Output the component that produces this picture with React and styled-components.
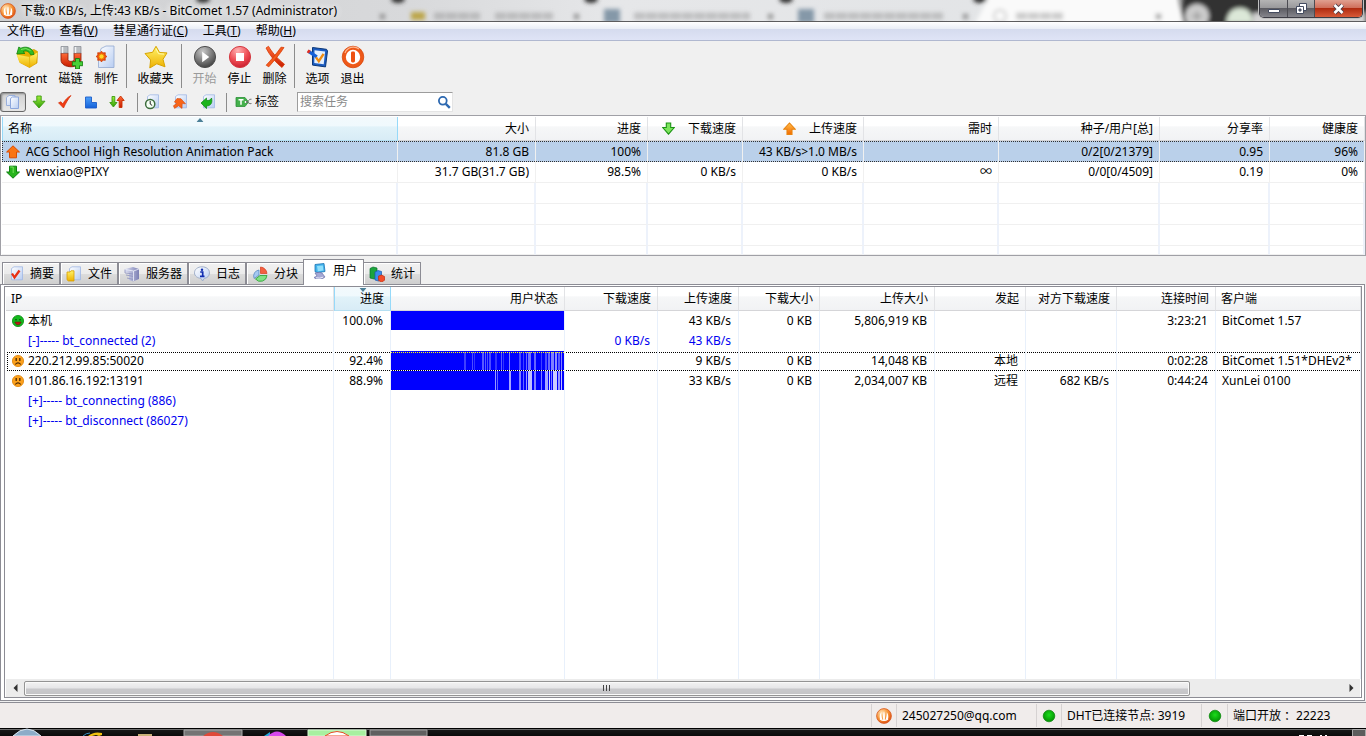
import React from "react";
import styled, { createGlobalStyle, css } from "styled-components";

const fontStack = `"Noto Sans", "Noto Sans CJK SC", sans-serif`;

const GlobalStyle = createGlobalStyle`
  * { box-sizing: border-box; }
  body { margin: 0; background: #f0f0f0; font: 12px/16px ${fontStack}; color: #000; }
  button, input, table { font: inherit; color: inherit; }
  svg { display: block; flex: none; }
`;

/* ---------- window frame ---------- */

const Window = styled.div`
  display: flex;
  flex-direction: column;
  height: 100vh;
  min-width: 1100px;
  overflow: hidden;
`;

const TitleBar = styled.header`
  position: relative;
  display: flex;
  align-items: center;
  gap: 5px;
  height: 22px;
  flex: none;
  overflow: hidden;
  border-bottom: 1px solid #5c5c5e;
  background: linear-gradient(90deg, #cfd0d2 0, #d8d9db 30%, #e6e7e9 45%, #e2e4e6 80%, #fff 84%, #f4f4f4 86%, #2c2c2c 87%, #333 100%);
`;

const Glass = styled.svg`
  position: absolute;
  inset: 0;
  width: 100%;
  height: 100%;
`;

const AppTitle = styled.h1`
  position: relative;
  flex: 1;
  margin: 0;
  font-size: 12px;
  line-height: 20px;
  font-weight: 400;
  text-shadow: 0 0 6px #fff, 0 0 8px #fff;
`;

const TitleIcon = styled.span`
  position: relative;
  padding-top: 1px;
`;

const Captions = styled.div`
  position: relative;
  display: flex;
  align-self: flex-start;
  height: 18px;
  margin-right: 3px;
  border: 1px solid #3c3c44;
  border-top: 0;
  border-radius: 0 0 5px 5px;
  overflow: hidden;
  box-shadow: 0 0 0 1px #c0c0c0;
`;

const CaptionButton = styled.button`
  display: flex;
  align-items: center;
  justify-content: center;
  width: ${(p) => p.$width}px;
  padding: 0;
  border: 0;
  border-right: 1px solid #4c4c52;
  background: ${(p) =>
    p.$close
      ? "linear-gradient(#e0a090, #d0705c 45%, #b02c10 50%, #d85a38)"
      : "linear-gradient(#b4b4b4, #9a9a9c 45%, #5c5c62 50%, #85858c)"};
  &:last-child { border-right: 0; }
`;

const MenuBar = styled.nav`
  display: flex;
  flex: none;
  height: 19px;
  border-bottom: 1px solid #b0b8d0;
  background: linear-gradient(#fff 0, #e9edf6 7px, #d5dbee 7px, #dfe4f6 100%);
`;

const MenuItem = styled.button`
  padding: 0 8px 0 7px;
  border: 0;
  background: none;
  line-height: 18px;
  white-space: nowrap;
`;

/* ---------- toolbars ---------- */

const Toolbar = styled.div`
  display: flex;
  flex: none;
  height: 48px;
  padding-top: 3px;
`;

const Divider = styled.div`
  width: 1px;
  height: ${(p) => p.$height}px;
  margin: 0 ${(p) => p.$after}px 0 ${(p) => p.$before}px;
  background: #8c8c8c;
`;

const ToolButton = styled.button`
  display: flex;
  flex-direction: column;
  align-items: center;
  width: ${(p) => p.$width}px;
  padding: 1px 0 0;
  border: 0;
  background: none;
  line-height: 18px;
  white-space: nowrap;
  gap: 1px;
  color: ${(p) => (p.disabled ? "#9a9a9a" : "#000")};
`;

const FilterBar = styled.div`
  display: flex;
  align-items: center;
  flex: none;
  height: 26px;
`;

const FilterButton = styled.button`
  display: flex;
  align-items: center;
  justify-content: center;
  width: ${(p) => p.$width}px;
  height: 20px;
  padding: 0;
  border: 1px solid transparent;
  border-radius: 3px;
  background: none;
  ${(p) =>
    p.$pressed &&
    css`
      border-color: #686868;
      background: linear-gradient(#d0d0d0, #e8e8e8);
      box-shadow: inset 1px 1px 2px #888;
    `}
`;

const TagButton = styled.button`
  display: flex;
  align-items: center;
  gap: 3px;
  padding: 0;
  margin-right: 18px;
  border: 0;
  background: none;
`;

const SearchBox = styled.label`
  display: flex;
  align-items: center;
  width: 156px;
  height: 20px;
  padding: 0 1px 0 2px;
  border: 1px solid #e4e4e4;
  border-top-color: #9c9c9c;
  border-left-color: #9c9c9c;
  background: #fff;
`;

const SearchInput = styled.input`
  flex: 1;
  min-width: 0;
  padding: 0;
  border: 0;
  outline: 0;
  background: none;
  &::placeholder { color: #8a8a8a; opacity: 1; }
`;

/* ---------- lists ---------- */

const TaskPane = styled.section`
  flex: none;
  height: 141px;
  padding: 1px 0 1px 1px;
  overflow: hidden;
  border: 1px solid #a0a0a6;
  background: #fff;
`;

const Grid = styled.table`
  width: 100%;
  height: ${(p) => (p.$fill ? "100%" : "auto")};
  table-layout: fixed;
  border-collapse: separate;
  border-spacing: 0;
`;

const HeadCell = styled.th`
  position: relative;
  height: 24px;
  padding: 0 6px 0 5px;
  overflow: hidden;
  border-right: 1px solid #e2e3e6;
  border-bottom: 1px solid #d5d5d8;
  background: linear-gradient(#fff 0, #fff 40%, #f6f7f8 42%, #f1f2f4 100%);
  font-weight: 400;
  text-align: ${(p) => p.$align || "right"};
  white-space: nowrap;
  ${(p) =>
    p.$sorted &&
    css`
      border-right-color: #96d9f9;
      border-bottom-color: #b4dff2;
      border-left: 1px solid #96d9f9;
      background: linear-gradient(#f2f9fc 0, #f0f9fd 40%, #e1f2f9 42%, #d8ecf6 100%);
    `}
`;

const HeadLabel = styled.span`
  display: flex;
  align-items: center;
  justify-content: ${(p) => (p.$align === "left" ? "flex-start" : "flex-end")};
  gap: 13px;
`;

const SortMark = styled.svg`
  position: absolute;
  top: 1px;
  left: 50%;
  transform: translateX(-50%);
`;

const dots = (color) => `repeating-linear-gradient(90deg, ${color} 0 1px, transparent 1px 2px)`;
const dotsDown = (color) => `repeating-linear-gradient(${color} 0 1px, transparent 1px 2px)`;

const TaskCell = styled.td`
  height: ${(p) => p.$height || 21}px;
  padding: 0 6px 0 4px;
  overflow: hidden;
  border-right: ${(p) => (p.$empty ? "2px solid #edf2fb" : "1px solid #f0f0f0")};
  border-bottom: ${(p) => (p.$selected ? "0" : "1px solid #f0f0f0")};
  text-align: right;
  white-space: nowrap;
  ${(p) =>
    p.$selected &&
    css`
      background: ${dots("#303030")} 0 0 / 100% 1px no-repeat, ${dots("#303030")} 0 100% / 100% 1px no-repeat, #bad0ea;
      &:first-child {
        background: ${dots("#303030")} 0 0 / 100% 1px no-repeat, ${dots("#303030")} 0 100% / 100% 1px no-repeat,
          ${dotsDown("#303030")} 0 0 / 1px 100% no-repeat, #bad0ea;
      }
    `}
`;

const NameLine = styled.span`
  display: flex;
  align-items: center;
  gap: ${(p) => p.$gap}px;
`;

/* ---------- tabs ---------- */

const TabStrip = styled.div`
  display: flex;
  align-items: flex-end;
  flex: none;
  height: 28px;
  padding-left: 2px;
`;

const Tab = styled.button`
  display: flex;
  align-items: center;
  gap: 6px;
  height: 22px;
  padding: 0 5px;
  border: 1px solid #8c8c94;
  border-bottom: 0;
  box-shadow: inset 1px 1px 0 #fff;
  background: linear-gradient(#f2f2f2 0, #ebebeb 50%, #dcdcdc 52%, #cfcfcf 100%);
  white-space: nowrap;
  ${(p) =>
    p.$active &&
    css`
      position: relative;
      z-index: 1;
      height: 26px;
      margin: 0 -1px;
      margin-bottom: -1px;
      padding: 0 6px 4px 7px;
      background: #fff;
    `}
`;

const TabPanel = styled.section`
  display: flex;
  flex: 1;
  min-height: 0;
  margin: 0 1px 0 0;
  padding: 1px 2px 2px 3px;
  border: 1px solid #8c8c94;
  background: #fff;
`;

const PeerPane = styled.div`
  display: flex;
  flex-direction: column;
  flex: 1;
  min-width: 0;
  padding: 0 0 0 1px;
  border: 1px solid #8c8c94;
`;

const PeerScroll = styled.div`
  flex: 1;
  min-height: 0;
`;

const PeerCell = styled.td`
  height: ${(p) => (p.$filler ? "auto" : "20px")};
  padding: ${(p) => (p.$flush ? "0" : "0 7px 0 6px")};
  border-right: 1px solid #e8f0fb;
  text-align: ${(p) => p.$align || "right"};
  vertical-align: ${(p) => (p.$flush ? "top" : "middle")};
  white-space: nowrap;
  color: ${(p) => (p.$link ? "#0000f0" : "#000")};
  &:first-child { padding-left: ${(p) => (p.$link ? 22 : 6)}px; text-align: left; }
  ${(p) =>
    p.$focused &&
    css`
      background: ${dots("#000")} 1px 1px / 100% 1px no-repeat, ${dots("#000")} 1px 100% / 100% 1px no-repeat;
      &:first-child {
        background: ${dots("#000")} 1px 1px / 100% 1px no-repeat, ${dots("#000")} 1px 100% / 100% 1px no-repeat,
          ${dotsDown("#000")} 1px 1px / 1px 100% no-repeat;
      }
    `}
`;

const ScrollBar = styled.div`
  display: flex;
  align-items: center;
  flex: none;
  height: 18px;
  margin-right: 1px;
  background: #ececec;
`;

const ScrollArrow = styled.button`
  display: flex;
  align-items: center;
  justify-content: center;
  width: 18px;
  height: 16px;
  padding: 0;
  border: 0;
  background: none;
`;

const ScrollThumb = styled.div`
  display: flex;
  align-items: center;
  justify-content: center;
  flex: 23 1 0;
  height: 15px;
  border: 1px solid #949494;
  border-radius: 2px;
  box-shadow: inset 0 0 0 1px #fafafa;
  background: linear-gradient(#f3f3f3 0, #e6e6e8 48%, #c9c9cc 52%, #c4c4c6 100%);
`;

const ScrollTrack = styled.div`
  flex: 3 1 0;
`;

/* ---------- status bar and taskbar ---------- */

const StatusBar = styled.footer`
  display: flex;
  justify-content: flex-end;
  flex: none;
  height: 26px;
  margin-top: 1px;
  padding: 1px 2px 1px 0;
  border-top: 1px solid #8c8c94;
  background: #f0eceb;
`;

const StatusCell = styled.div`
  display: flex;
  align-items: center;
  justify-content: ${(p) => (p.$icon ? "center" : "flex-start")};
  width: ${(p) => p.$width}px;
  padding-left: ${(p) => (p.$icon ? 0 : 5)}px;
  border-left: 1px solid #d6d2d2;
  white-space: pre;
`;

const Taskbar = styled.div`
  flex: none;
  height: 8px;
  overflow: hidden;
  display: flex;
  justify-content: space-between;
  background: linear-gradient(#000 0, #000 1px, #6c6c6c 1px, #6c6c6c 2px, #161616 2px, #0a0a0a 100%);
`;

/* ---------- drawings ---------- */

const SharedDefs = () => (
  <svg width="0" height="0" style={{ position: "absolute" }} aria-hidden="true">
    <defs>
      <linearGradient id="gYellow" x2="0" y2="1"><stop stopColor="#fff36a" /><stop offset="1" stopColor="#eeb000" /></linearGradient>
      <linearGradient id="gGreen" x2="0" y2="1"><stop stopColor="#a4f03c" /><stop offset="1" stopColor="#2c9c08" /></linearGradient>
      <linearGradient id="gOrange" x2="0" y2="1"><stop stopColor="#ffc04c" /><stop offset="1" stopColor="#f46800" /></linearGradient>
      <linearGradient id="gRed" x2="0" y2="1"><stop stopColor="#ff6c38" /><stop offset="1" stopColor="#c81c00" /></linearGradient>
      <linearGradient id="gBlue" x2="0" y2="1"><stop stopColor="#4ca0fa" /><stop offset="1" stopColor="#1460d8" /></linearGradient>
      <linearGradient id="gPage" x2="1" y2="1"><stop stopColor="#fff" /><stop offset="1" stopColor="#b8cdf2" /></linearGradient>
      <linearGradient id="gServer" x2="1" y2="0"><stop stopColor="#dcdff2" /><stop offset="1" stopColor="#7c80b4" /></linearGradient>
      <radialGradient id="gGrey" cx=".4" cy=".25" r=".8"><stop stopColor="#c8c8c8" /><stop offset=".6" stopColor="#747474" /><stop offset="1" stopColor="#3c3c3c" /></radialGradient>
      <radialGradient id="gStop" cx=".4" cy=".2" r=".8"><stop stopColor="#ffb4b4" /><stop offset=".6" stopColor="#ee4c54" /><stop offset="1" stopColor="#cc2030" /></radialGradient>
      <radialGradient id="gComet" cx=".35" cy=".3" r=".8"><stop stopColor="#ffe4b8" /><stop offset=".55" stopColor="#f69030" /><stop offset="1" stopColor="#d84410" /></radialGradient>
      <radialGradient id="gBall" cx=".5" cy=".4" r=".6"><stop stopColor="#1cdc1c" /><stop offset="1" stopColor="#029002" /></radialGradient>
    </defs>
  </svg>
);

const Comet = ({ size = 16 }) => (
  <svg width={size} height={size} viewBox="0 0 16 16">
    <circle cx="8" cy="8" r="7.4" fill="url(#gComet)" stroke="#d85820" strokeWidth=".8" />
    <path d="M4 11.5C3.2 8 4 5.5 5.3 4.2 5 6.5 5.6 9 6.4 11.6zM7.2 12.2C6.8 8 7.2 5 8 3.2 8.8 5 9.2 8 8.8 12.2zM9.6 11.6C10.4 9 11 6.5 10.7 4.2 12 5.5 12.8 8 12 11.5z" fill="#fff" />
    <path d="M4 11q4 3 8 0" fill="none" stroke="#fff" strokeWidth="1.2" />
  </svg>
);

const Icon24 = ({ children }) => (
  <svg width="24" height="24" viewBox="0 0 24 24">{children}</svg>
);
const Icon16 = ({ children }) => (
  <svg width="16" height="16" viewBox="0 0 16 16">{children}</svg>
);

const TorrentIcon = () => (
  <Icon24>
    <path d="M2 8 10 5l3 1 6-1.500 3.500 2-.5 11.500-7.500 4.500L5 17.500z" fill="#e8b000" stroke="#d09a00" strokeWidth=".7" />
    <path d="M1.500 9.500 14.500 12 22.500 7.500 21 18 14.500 22.500 4.500 17.500z" fill="url(#gYellow)" />
    <path d="m14.500 12 .2 10.400" stroke="#e0b000" strokeWidth=".7" />
    <path d="M19 9.500C18.500 3 11 .6 5.800 3.200L3.800 2 1.800 9l8.200-.6-2-1.800C11 5.200 14 6 15.500 9.800z" fill="#30bc24" stroke="#118410" strokeWidth=".8" />
    <path d="M6 4.500q5-2.500 9.500 1" fill="none" stroke="#7ce068" />
  </Icon24>
);
const MagnetIcon = () => (
  <Icon24>
    <path d="M2 8v7c0 9 20 9 20 0V8h-7v6.5c0 2.5-6 2.5-6 0V8z" fill="url(#gRed)" stroke="#8c1600" strokeWidth=".8" />
    <path d="M2 1.5h7V8H2zM15 1.5h7V8h-7z" fill="#b8bcc0" stroke="#848890" strokeWidth=".7" />
    <path d="M3.5 2v6M16.5 2v6" stroke="#f0f2f4" strokeWidth="1.5" />
    <path d="M16.5 13.5h4v3.2h3.2v4h-3.2V24h-4v-3.3h-3.2v-4h3.2z" fill="#48d038" stroke="#157c10" strokeWidth=".9" />
  </Icon24>
);
const MakeIcon = () => (
  <Icon24>
    <path d="M7 3.5 12 1h8v21.5H4.5V14z" fill="url(#gPage)" stroke="#92a8d0" strokeWidth=".8" />
    <path d="m7.500 6.200 1.400 1.700 2.400-.2-.2 2.400 1.800 1.400-1.800 1.500.2 2.300-2.400-.2-1.400 1.800-1.500-1.800-2.300.2.200-2.300-1.800-1.500 1.800-1.400-.2-2.400 2.300.2z" fill="#ee5010" stroke="#d03c00" strokeWidth=".8" />
    <circle cx="7.500" cy="11.500" r="2.500" fill="#ffd428" stroke="#f08800" />
  </Icon24>
);
const StarIcon = () => (
  <Icon24>
    <path d="m12 1.3 3.600 6.200 7.400.4-4 6.400 2 7.500-8.200-3-7 4.200.8-8L1 8.500l7.600-1.200z" fill="url(#gYellow)" stroke="#d8a400" strokeWidth="1" strokeLinejoin="round" />
    <path d="m12 3.5 2.5 5.2 5.5.4" fill="none" stroke="#fffbb0" />
  </Icon24>
);
const PlayIcon = () => (
  <Icon24>
    <circle cx="12" cy="12" r="10.6" fill="url(#gGrey)" stroke="#505050" />
    <path d="M9.2 6.8v10.4l7-5.2z" fill="#fff" />
  </Icon24>
);
const StopIcon = () => (
  <Icon24>
    <circle cx="12" cy="12" r="10.6" fill="url(#gStop)" stroke="#d43c44" />
    <path d="M8 8h8v8H8z" fill="#fff" />
  </Icon24>
);
const DeleteIcon = () => (
  <Icon24>
    <path d="M3 3 5.500 1.300C8.500 6.500 13.500 13 21.500 19.200L19 22.500C12.500 17.500 6.500 10 3 3z" fill="url(#gRed)" stroke="#d83c08" strokeWidth=".8" />
    <path d="M18 2.200 21 2.500C17 9 11 15.800 5.800 21.800l-2.600-1.600C8 15 13.500 8.800 18 2.200z" fill="#f45a1c" stroke="#d83c08" strokeWidth=".8" />
  </Icon24>
);
const OptionsIcon = () => (
  <Icon24>
    <path d="m6.5 2.5 14 1.8 1 1.6-2 16-13-1.8z" fill="#1c5cc0" stroke="#0c3878" strokeWidth="1" />
    <path d="m8.5 5.2 10.6 1.2-1.4 12.8-9.4-1.3z" fill="#e4f0fe" />
    <path d="m2.2 6.2 8.6 5.6" stroke="#1460d8" strokeWidth="3.2" />
    <path d="m1.6 5.8 2.2 1.4" stroke="#e43020" strokeWidth="3.2" />
    <path d="m10 12.4 2.8 3.8 4.8-7.4" fill="none" stroke="#f08c10" strokeWidth="2.4" />
  </Icon24>
);
const ExitIcon = () => (
  <Icon24>
    <circle cx="12" cy="12" r="10.8" fill="#ee5818" stroke="#d44408" strokeWidth=".7" />
    <circle cx="12" cy="12" r="7.2" fill="#fff" />
    <rect x="10" y="6.5" width="4" height="11" rx="1.4" fill="#ee5010" />
    <path d="M4 8a9 9 0 0 1 14-4" fill="none" stroke="#ffb48c" strokeWidth="1.2" />
  </Icon24>
);

const PagesIcon = () => (
  <Icon16>
    <path d="M1.5 3.5 4 1.5h6v10H1.5z" fill="url(#gPage)" stroke="#9ab0dc" />
    <path d="M5.5 4.5 7.5 3h6v11.5h-8z" fill="url(#gPage)" stroke="#8ca6dc" />
  </Icon16>
);
const DownIcon = () => (
  <Icon16><path d="M5.8 2h4.4v5.2H14L8 14 2 7.2h3.8z" fill="url(#gGreen)" stroke="#3c9c10" strokeWidth=".9" /></Icon16>
);
const CheckIcon = () => (
  <Icon16><path d="m1.5 8.8 2.5-1L5.8 10C7.8 6.2 10.5 3.2 14 1.5 11.2 5 8.8 9 6.5 14z" fill="#f03c14" stroke="#d42c04" strokeWidth=".7" /></Icon16>
);
const ShapeIcon = () => (
  <Icon16><path d="M2.5 3h6v5.5h5v5.5h-11z" fill="url(#gBlue)" stroke="#1c5cc8" strokeWidth=".9" /></Icon16>
);
const BothIcon = () => (
  <Icon16>
    <path d="M3 2.5h2.8v6H8L4.4 13 .8 8.5H3z" fill="url(#gGreen)" stroke="#3c9c10" strokeWidth=".9" />
    <path d="M10.2 13.5v-7H8L11.6 2l3.6 4.5H13v7z" fill="url(#gRed)" stroke="#c83000" strokeWidth=".9" />
  </Icon16>
);
const PageBase = () => <path d="M3.5 2.5 6 .8h8.5v13h-11z" fill="url(#gPage)" stroke="#a0b8e4" strokeWidth=".8" />;
const ClockPageIcon = () => (
  <Icon16><PageBase /><circle cx="6.200" cy="10" r="4.600" fill="#f4fff4" stroke="#3c6c3c" strokeWidth="1.500" /><path d="M6.200 7v3l2 1.500" fill="none" stroke="#222" /></Icon16>
);
const UpPageIcon = () => (
  <Icon16><PageBase /><path d="M5 4.500 9 4.800l4.500 5-3.300-.2-.2 4.800-3.400-2.600-4 2.600-1.200-2.600 3.200-2.200L2.400 8z" fill="#f86418" stroke="#d04810" strokeWidth=".6" /></Icon16>
);
const DownPageIcon = () => (
  <Icon16><PageBase /><path d="M1 9 6.500 4v2.500c3 .2 4.500-.8 5-2.500 1.400 5-1 8-5 8v2.600z" fill="#1cb41c" stroke="#0c8410" strokeWidth=".7" /></Icon16>
);
const TagIcon = () => (
  <svg width="17" height="14" viewBox="0 0 17 14">
    <path d="M1 2.5h9l3.5 4.5-3.5 4.5H1z" fill="#44b04c" stroke="#2c9038" strokeWidth=".8" />
    <path d="M3.5 4.8h5M6 4.8v5" stroke="#fff" strokeWidth="1.5" />
    <circle cx="10.6" cy="7" r="1" fill="#fff" />
    <path d="M11 7c3 0 2.5-3.5 5.5-2.8M11 7c3 0 3 2.5 5.5 1.5" fill="none" stroke="#666" strokeWidth=".9" />
  </svg>
);
const SearchIcon = () => (
  <svg width="14" height="14" viewBox="0 0 14 14">
    <circle cx="5.8" cy="5.8" r="3.9" fill="#fff" stroke="#2c68b0" strokeWidth="1.8" />
    <path d="m8.8 8.8 4 4" stroke="#2c68b0" strokeWidth="2.4" />
  </svg>
);

const HeadDownIcon = () => (
  <svg width="13" height="13" viewBox="0 0 13 13"><path d="M4.3 1h4.4v4.5H12.3L6.5 12.2.7 5.5h3.6z" fill="#7ce45c" stroke="#1c9414" strokeWidth="1.1" /></svg>
);
const HeadUpIcon = () => (
  <svg width="13" height="13" viewBox="0 0 13 13"><path d="M4 12.4h5V7.2h3.2L6.5 1 .8 7.2H4z" fill="url(#gOrange)" stroke="#e88410" strokeWidth="1.1" /></svg>
);
const SeedIcon = () => (
  <svg width="14" height="14" viewBox="0 0 14 14"><path d="M3.5 12.8h7V7h3L7 .8.6 7h2.9z" fill="#fa7414" stroke="#dc4c00" /></svg>
);
const LeechIcon = () => (
  <svg width="14" height="14" viewBox="0 0 14 14"><path d="M3.5 1.2h7V7h3L7 13.2.6 7h2.9z" fill="#28b41c" stroke="#0c8010" /><path d="M4.2 2h3v6" fill="none" stroke="#78e060" /></svg>
);
const Face = ({ happy }) => (
  <svg width="12" height="14" viewBox="0 0 12 14">
    <circle cx="6" cy="7" r="5.6" fill={happy ? "#14b81c" : "#fba01c"} stroke={happy ? "#088c10" : "#e08408"} strokeWidth=".8" />
    {happy ? (
      <><path d="M3 5.8h2M7 5.8h2" stroke="#064c08" /><path d="M2.8 8h6.4Q8 11 6 11T2.8 8z" fill="#c01818" stroke="#5c2008" strokeWidth=".6" /></>
    ) : (
      <><path d="M4.2 4v3M7.8 4v3" stroke="#4c2800" strokeWidth="1.3" /><path d="M3.2 10.5Q6 7.2 8.8 10.5" fill="none" stroke="#4c2800" strokeWidth="1.1" /></>
    )}
  </svg>
);
const Ball = () => (
  <svg width="14" height="14" viewBox="0 0 14 14"><circle cx="7" cy="7" r="5.8" fill="url(#gBall)" stroke="#088408" strokeWidth=".7" /></svg>
);

const tabIcons = {
  summary: <Icon16><PageBase /><path d="m4 7.5 2.5 4 5-7" fill="none" stroke="#e83014" strokeWidth="2.3" /></Icon16>,
  files: <Icon16><PageBase /><path d="M1 6h3l1-1.2h3V15H2.5L1 13.8z" fill="url(#gYellow)" stroke="#d8a000" strokeWidth=".8" /></Icon16>,
  servers: (
    <Icon16>
      <path d="M1 3 9 1l6 2v10l-6 2.5L5 14V7L1 6z" fill="url(#gServer)" />
      <path d="M1 3.5 9.5 5v10M9.5 5 15 3" fill="none" stroke="#eef0fa" strokeWidth=".8" />
      <path d="M1 3.5V7l8 1M2 9l7 1.4M3 12l6 1.4" fill="none" stroke="#8c90bc" strokeWidth=".8" />
    </Icon16>
  ),
  log: (
    <Icon16>
      <path d="M8 .8c4.4 0 7.5 2.5 7.5 6S13 12 10.3 12.4L8.6 15 7 12.4C3.5 12 .5 10.2.5 6.8S3.6.8 8 .8z" fill="url(#gPage)" stroke="#98a8c4" strokeWidth=".9" />
      <circle cx="8" cy="3.7" r="1.2" fill="#102cb0" /><path d="M6.2 6h2.5v4M6 10.3h4.5" fill="none" stroke="#102cb0" strokeWidth="1.7" />
    </Icon16>
  ),
  pieces: (
    <Icon16>
      <path d="M7 4v5l-4.8 3.5A6 6 0 0 1 7 4z" fill="#a4c8f0" stroke="#4c80bc" strokeWidth=".7" />
      <path d="M8.5 1A7 7 0 0 1 15 7.5H8.5z" fill="#f46040" stroke="#d43c1c" strokeWidth=".7" />
      <path d="M8 9.5h7A6.5 6.5 0 0 1 3.5 13z" fill="#80e084" stroke="#24a02c" strokeWidth=".8" />
    </Icon16>
  ),
  users: (
    <Icon16>
      <path d="M4 1.5 13 .5l1 8-7 1.2-3-1z" fill="#44b4ec" stroke="#1c74b4" strokeWidth=".8" />
      <path d="m6 3 5.8-.6.6 5-5.6.8z" fill="#90e0fc" />
      <path d="M4 10q5-1.5 7 0l3 4-3 2H5l-2-1.5 3-1.5z" fill="#a4a8d4" stroke="#6c70a8" strokeWidth=".7" />
      <path d="M5 14.8q4 1 7-.6" fill="none" stroke="#eceefa" />
    </Icon16>
  ),
  stats: (
    <Icon16>
      <path d="M1 2.5 4 1l4 1v10l-3 1-4-1z" fill="#1ca43c" stroke="#08702c" strokeWidth=".7" />
      <path d="m6 6 3-1.5 3.5 1V14l-3 1L6 14z" fill="#3c8ce8" stroke="#1458b0" strokeWidth=".7" />
      <path d="m9.5 10 3-1 3 1.5v3.8L12.6 16l-3-1.5z" fill="#f44c28" stroke="#c42c08" strokeWidth=".7" />
    </Icon16>
  ),
};

const BlurredTabs = () => (
  <Glass preserveAspectRatio="xMaxYMin slice" viewBox="0 0 1366 21" aria-hidden="true">
    <defs>
      <filter id="soft" x="-20%" y="-60%" width="140%" height="220%"><feGaussianBlur stdDeviation="2" /></filter>
    </defs>
    <g filter="url(#soft)">
      <path d="M1185 -5h181v30h-185z" fill="#303030" />
      <path d="M990 -6h182q8 14 12 30H975z" fill="#fafafa" />
      {[203, 398, 591, 786, 980].map((x) => <ellipse key={x} cx={x} cy="-1" rx="7" ry="4" fill="#303030" />)}
      <rect x="411" y="12" width="14" height="8" fill="#bca648" />
      {[604, 798].map((x) => <rect key={x} x={x} y="9" width="16" height="14" fill="#8598a8" />)}
      {[[434, 46], [495, 58], [634, 116], [824, 120], [1016, 48]].map(([x, w]) => (
        <path key={x} d={`M${x} 16h${w}`} stroke="#888" strokeOpacity=".42" strokeWidth="7" strokeDasharray="11 1" />
      ))}
      {[382, 576, 770, 965, 1158].map((x) => <path key={x} d={`M${x - 2} 14l5 5m0-5-5 5`} stroke="#888" strokeWidth="2" />)}
      <circle cx="1000" cy="16" r="6" fill="none" stroke="#ccc" strokeWidth="2" />
      <circle cx="1197" cy="16" r="12" fill="#cccccc" />
      <path d="m1192 16h10m-5-5v10" stroke="#999" strokeWidth="2" />
      <path d="M1226 23q2-15 14-15t13 15z" fill="#dce8d8" />
      <path d="M1253 13h113v14h-113z" fill="#d4d4d4" />
    </g>
  </Glass>
);

/* ---------- data ---------- */

const menus = [["文件", "F"], ["查看", "V"], ["彗星通行证", "C"], ["工具", "T"], ["帮助", "H"]];

const tools = [
  [
    { label: "Torrent", width: 53, icon: <TorrentIcon /> },
    { label: "磁链", width: 35, icon: <MagnetIcon /> },
    { label: "制作", width: 36, icon: <MakeIcon /> },
  ],
  [{ label: "收藏夹", width: 47, icon: <StarIcon /> }],
  [
    { label: "开始", width: 35, icon: <PlayIcon />, disabled: true },
    { label: "停止", width: 35, icon: <StopIcon /> },
    { label: "删除", width: 35, icon: <DeleteIcon /> },
  ],
  [
    { label: "选项", width: 35, icon: <OptionsIcon /> },
    { label: "退出", width: 35, icon: <ExitIcon /> },
  ],
];

const statusFilters = [
  ["全部", <PagesIcon />], ["下载中", <DownIcon />], ["已完成", <CheckIcon />], ["未完成", <ShapeIcon />], ["活动", <BothIcon />],
];
const timeFilters = [["最近", <ClockPageIcon />], ["上传", <UpPageIcon />], ["下载", <DownPageIcon />]];

const taskColumns = [
  { label: "名称", align: "left", sorted: true },
  { label: "大小", width: 138 },
  { label: "进度", width: 112 },
  { label: "下载速度", width: 95, icon: <HeadDownIcon /> },
  { label: "上传速度", width: 121, icon: <HeadUpIcon /> },
  { label: "需时", width: 135 },
  { label: "种子/用户[总]", width: 161 },
  { label: "分享率", width: 110 },
  { label: "健康度", width: 95 },
];
const tasks = [
  { icon: <SeedIcon />, selected: true, cells: ["ACG School High Resolution Animation Pack", "81.8 GB", "100%", "", "43 KB/s>1.0 MB/s", "", "0/2[0/21379]", "0.95", "96%"] },
  { icon: <LeechIcon />, cells: ["wenxiao@PIXY", "31.7 GB(31.7 GB)", "98.5%", "0 KB/s", "0 KB/s", "∞", "0/0[0/4509]", "0.19", "0%"] },
];

const tabs = [
  ["summary", "摘要"], ["files", "文件"], ["servers", "服务器"], ["log", "日志"], ["pieces", "分块"], ["users", "用户"], ["stats", "统计"],
];

const peerColumns = [
  { label: "IP", align: "left" },
  { label: "进度", width: 57, sorted: true, down: true },
  { label: "用户状态", width: 174 },
  { label: "下载速度", width: 93 },
  { label: "上传速度", width: 81 },
  { label: "下载大小", width: 81 },
  { label: "上传大小", width: 115 },
  { label: "发起", width: 91 },
  { label: "对方下载速度", width: 91 },
  { label: "连接时间", width: 99 },
  { label: "客户端", width: 145, align: "left" },
];

/* each gap is [start, width, lightness] along a 173-unit bar */
const sparseGaps = [
  [73, 2, 0.25], [81, 1, 0.3], [83, 1, 0.2], [91, 2, 0.35], [94, 1, 0.35], [96, 1, 0.3], [98, 2, 0.3], [104, 2, 0.2],
  [110, 1, 0.35], [112, 1, 0.2], [118, 1, 0.5], [128, 2, 0.3], [132, 1, 0.25], [135, 1, 0.4], [137, 3, 0.45], [143, 2, 0.4],
  [150, 1, 0.25], [154, 2, 0.3], [157, 2, 0.4], [160, 3, 0.5], [164, 2, 0.55], [167, 2, 0.35], [170, 1, 0.5],
];
const wideGaps = [
  [104, 1, 0.6], [106, 1, 0.4], [118, 2, 0.65], [128, 2, 0.5], [132, 1, 0.4], [135, 1, 0.6], [137, 4, 0.75], [143, 2, 0.5],
  [150, 1, 0.5], [154, 3, 0.65], [158, 1, 0.85], [160, 1, 0.5], [162, 4, 0.8], [167, 2, 0.6], [170, 1, 0.75],
];

const peers = [
  { face: "happy", bar: [], cells: ["本机", "100.0%", null, "", "43 KB/s", "0 KB", "5,806,919 KB", "", "", "3:23:21", "BitComet 1.57"] },
  { link: true, cells: ["[-]----- bt_connected (2)", "", "", "0 KB/s", "43 KB/s", "", "", "", "", "", ""] },
  { face: "sad", focused: true, bar: sparseGaps, cells: ["220.212.99.85:50020", "92.4%", null, "", "9 KB/s", "0 KB", "14,048 KB", "本地", "", "0:02:28", "BitComet 1.51*DHEv2*"] },
  { face: "sad", bar: wideGaps, cells: ["101.86.16.192:13191", "88.9%", null, "", "33 KB/s", "0 KB", "2,034,007 KB", "远程", "682 KB/s", "0:44:24", "XunLei 0100"] },
  { link: true, cells: ["[+]----- bt_connecting (886)", "", "", "", "", "", "", "", "", "", ""] },
  { link: true, cells: ["[+]----- bt_disconnect (86027)", "", "", "", "", "", "", "", "", "", ""] },
];

const PieceBar = ({ gaps, focused }) => (
  <svg width="173" height="19" viewBox="0 0 173 19" shapeRendering="crispEdges">
    <path d="M0 0h173v19H0z" fill="#0000ff" />
    {gaps.map(([x, w, o]) => <rect key={x} x={x} y={focused ? 1 : 0} width={w} height="19" fill="#fff" opacity={o} />)}
    {focused && <path d="M0 1.5h173" stroke="#ffff00" strokeDasharray="1 1" />}
  </svg>
);

const Head = ({ columns }) => (
  <>
    <colgroup>
      {columns.map((c) => <col key={c.label} width={c.width} />)}
    </colgroup>
    <thead>
      <tr>
        {columns.map((c) => (
          <HeadCell key={c.label} $align={c.align} $sorted={c.sorted}>
            {c.sorted && (
              <SortMark width="7" height="4" viewBox="0 0 7 4">
                <path d={c.down ? "M0 0h7L3.5 4z" : "M0 4h7L3.5 0z"} fill="#4c8098" />
              </SortMark>
            )}
            <HeadLabel $align={c.align}>{c.icon}{c.label}</HeadLabel>
          </HeadCell>
        ))}
      </tr>
    </thead>
  </>
);

const taskbarItems = (
  <>
    <svg width="440" height="8" viewBox="0 0 440 8">
      <path d="M13 8q14-14 28 0z" fill="#8cacc8" stroke="#d8e4ee" />
      <path d="M88 8q6-5 14-3v2l-3 1-3-1-4 1z" fill="#f0c010" />
      <path d="M83 8q3-3 7-3" stroke="#3490c0" fill="none" />
      <path d="M138 6h14v2h-14z" fill="#c8b078" />
      <path d="M184 2h58v6h-58z" fill="#747474" stroke="#aaa" />
      <path d="M203 8q10-8 20 0z" fill="#e04838" />
      <path d="M264 8l6-4v4z" fill="#20a8d8" />
      <path d="M268 8q9-9 18 0z" fill="#d848ec" />
      <path d="M308 2h58v6h-58z" fill="#a8f0a0" stroke="#d8f8d4" />
      <path d="M325 8q12-9 24 0z" fill="#fff" stroke="#e84c28" />
      <path d="M370 2h57v6h-57z" fill="#606060" stroke="#a0a0a0" />
    </svg>
    <svg width="80" height="8" viewBox="0 0 80 8">
      <path d="M13 7.5h5M21 7.5h5M34 7.5h2M39 7.5h2" stroke="#fff" />
      <path d="M66.500 1.500h13v7h-13z" fill="#5c5c5c" stroke="#a8a8a8" />
    </svg>
  </>
);

export default function App() {
  return (
    <Window>
      <GlobalStyle />
      <SharedDefs />
      <TitleBar>
        <BlurredTabs />
        <TitleIcon><Comet /></TitleIcon>
        <AppTitle>下载:0 KB/s, 上传:43 KB/s - BitComet 1.57 (Administrator)</AppTitle>
        <Captions>
          <CaptionButton $width={28} aria-label="最小化">
            <svg width="12" height="10" viewBox="0 0 12 10"><path d="M.5 5.500h11v3H.5z" fill="#fff" stroke="#444c60" /></svg>
          </CaptionButton>
          <CaptionButton $width={27} aria-label="还原">
            <svg width="13" height="13" viewBox="0 0 13 13">
              <path d="M4.500 1.500h7v7h-7z" fill="#fff" stroke="#444c60" />
              <path d="M1.500 4.500h7v7h-7z" fill="#fff" stroke="#444c60" />
              <path d="M4 7h2v2H4z" fill="#667" stroke="#444c60" />
            </svg>
          </CaptionButton>
          <CaptionButton $width={47} $close aria-label="关闭">
            <svg width="13" height="12" viewBox="0 0 13 12">
              <path d="m2.500 2 8 8m0-8-8 8" stroke="#4c3c48" strokeWidth="4.500" />
              <path d="m2.500 2 8 8m0-8-8 8" stroke="#fff" strokeWidth="2.600" />
            </svg>
          </CaptionButton>
        </Captions>
      </TitleBar>

      <MenuBar>
        {menus.map(([label, key]) => (
          <MenuItem key={key}>{label}(<u>{key}</u>)</MenuItem>
        ))}
      </MenuBar>

      <Toolbar>
        {tools.map((group, i) => (
          <React.Fragment key={group[0].label}>
            {i > 0 && <Divider $height={44} $before={2} $after={5} />}
            {group.map((t) => (
              <ToolButton key={t.label} $width={t.width} disabled={t.disabled}>
                {t.icon}
                {t.label}
              </ToolButton>
            ))}
          </React.Fragment>
        ))}
      </Toolbar>

      <FilterBar>
        {statusFilters.map(([label, icon], i) => (
          <FilterButton key={label} $width={26} $pressed={i === 0} aria-label={label}>{icon}</FilterButton>
        ))}
        <Divider $height={19} $before={7} $after={0} />
        {timeFilters.map(([label, icon]) => (
          <FilterButton key={label} $width={28} aria-label={label}>{icon}</FilterButton>
        ))}
        <Divider $height={19} $before={4} $after={8} />
        <TagButton><TagIcon />标签</TagButton>
        <SearchBox>
          <SearchInput placeholder="搜索任务" aria-label="搜索任务" />
          <SearchIcon />
        </SearchBox>
      </FilterBar>

      <TaskPane>
        <Grid>
          <Head columns={taskColumns} />
          <tbody>
            {tasks.map((task) => (
              <tr key={task.cells[0]}>
                {task.cells.map((text, i) => (
                  <TaskCell key={i} $selected={task.selected}>
                    {i === 0 ? <NameLine $gap={6}>{task.icon}{text}</NameLine> : text}
                  </TaskCell>
                ))}
              </tr>
            ))}
            {[21, 21, 21, 9].map((height, r) => (
              <tr key={r}>
                {taskColumns.map((c) => <TaskCell key={c.label} $empty $height={height} />)}
              </tr>
            ))}
          </tbody>
        </Grid>
      </TaskPane>

      <TabStrip role="tablist">
        {tabs.map(([id, label]) => (
          <Tab key={id} role="tab" aria-selected={id === "users"} $active={id === "users"}>
            {tabIcons[id]}
            {label}
          </Tab>
        ))}
      </TabStrip>

      <TabPanel>
        <PeerPane>
          <PeerScroll>
            <Grid $fill>
              <Head columns={peerColumns} />
              <tbody>
                {peers.map((peer) => (
                  <tr key={peer.cells[0]}>
                    {peer.cells.map((text, i) => (
                      <PeerCell
                        key={i}
                        $link={peer.link}
                        $focused={peer.focused}
                        $flush={text === null}
                        $align={peerColumns[i].align}
                      >
                        {text === null ? (
                          <PieceBar gaps={peer.bar} focused={peer.focused} />
                        ) : i === 0 && peer.face ? (
                          <NameLine $gap={4}><Face happy={peer.face === "happy"} />{text}</NameLine>
                        ) : (
                          text
                        )}
                      </PeerCell>
                    ))}
                  </tr>
                ))}
                <tr>
                  {peerColumns.map((c) => <PeerCell key={c.label} $filler />)}
                </tr>
              </tbody>
            </Grid>
          </PeerScroll>
          <ScrollBar>
            <ScrollArrow aria-label="向左滚动">
              <svg width="5" height="8" viewBox="0 0 5 8"><path d="M4.500 0v8L0.500 4z" fill="#303030" /></svg>
            </ScrollArrow>
            <ScrollThumb>
              <svg width="8" height="7" viewBox="0 0 8 7"><path d="M.5 0v6M3.500 0v6M6.500 0v6" stroke="#444" /></svg>
            </ScrollThumb>
            <ScrollTrack />
            <ScrollArrow aria-label="向右滚动">
              <svg width="5" height="8" viewBox="0 0 5 8"><path d="M.5 0v8l4-4z" fill="#303030" /></svg>
            </ScrollArrow>
          </ScrollBar>
        </PeerPane>
      </TabPanel>

      <StatusBar>
        <StatusCell $icon $width={25}><Comet /></StatusCell>
        <StatusCell $width={140}>245027250@qq.com</StatusCell>
        <StatusCell $icon $width={25}><Ball /></StatusCell>
        <StatusCell $width={140}>DHT已连接节点: 3919</StatusCell>
        <StatusCell $icon $width={26}><Ball /></StatusCell>
        <StatusCell $width={137}>端口开放 ：22223</StatusCell>
      </StatusBar>

      <Taskbar>{taskbarItems}</Taskbar>
    </Window>
  );
}
